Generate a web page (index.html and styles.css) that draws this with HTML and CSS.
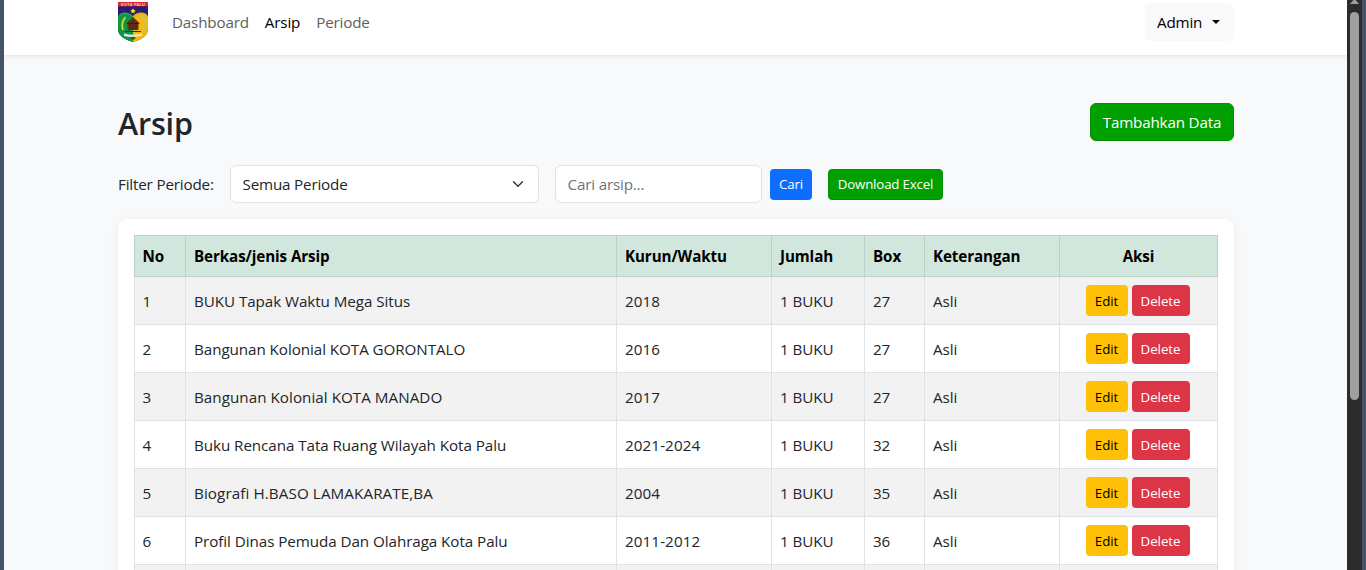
FILE: index.html
```html
<!DOCTYPE html>
<html lang="id">
<head>
<meta charset="utf-8">
<title>Arsip</title>
<link rel="stylesheet" href="styles.css">
</head>
<body>
<div class="window">
  <div class="page">
    <nav class="navbar">
      <svg class="logo" viewBox="0 0 30 40" width="30" height="40">
        <defs><clipPath id="shield"><path d="M0 4H30V27C30 34 23 37.500 15 40C7 37.500 0 34 0 27Z"/></clipPath></defs>
        <g clip-path="url(#shield)">
          <rect width="30" height="40" fill="#2b1b72"/>
          <path d="M0 15Q1 10.500 7 10.500Q12 10.500 15 14V40H0Z" fill="#149447"/>
          <path d="M30 15Q29 10.500 23 10.500Q18 10.500 15 14V40H30Z" fill="#f6b90e"/>
          <path d="M1.500 15Q2 11.500 7 11.300Q12 11.500 15 15Q18 11.500 23 11.300Q28 11.500 28.500 15" fill="none" stroke="#7fae8c" stroke-width=".5"/>
          <path d="M7.500 15Q2.500 21 5 28" fill="none" stroke="#c8dc28" stroke-width="1.800"/>
          <path d="M23.500 14Q29 21 25 29" fill="none" stroke="#a9cf86" stroke-width="1.800" stroke-dasharray="1.500 1"/>
          <path d="M15 15L22 21.500H20.500V28H9.500V21.500H8Z" fill="#6b3219"/>
          <path d="M9 21.500H21M12 20V28M15 18V28M18 20V28" stroke="#321a18" stroke-width=".8"/>
          <path d="M7 29.500H23" stroke="#393020" stroke-width="1.200"/>
          <path d="M6 31.500Q15 34 24 31.500V33.500Q15 36 6 34Z" fill="#e6ebdc"/>
          <path d="M12 36Q15 33.500 18 36L15 38Z" fill="#3c5323"/>
        </g>
        <path d="M15 6.200L15.900 7.900L17.700 8.200L16.400 9.500L16.700 11.300L15 10.500L13.300 11.300L13.600 9.500L12.300 8.200L14.100 7.900Z" fill="#f5e52c"/>
        <rect width="30" height="4.300" fill="#df2430"/>
        <text class="logo-text" x="15" y="3.600" text-anchor="middle" textLength="24">KOTA PALU</text>
      </svg>
      <a class="nav-link nav-dashboard">Dashboard</a>
      <a class="nav-link active">Arsip</a>
      <a class="nav-link">Periode</a>
      <button class="btn btn-light">Admin<span class="caret"></span></button>
    </nav>
    <main class="content">
      <header class="heading">
        <h2>Arsip</h2>
        <button class="btn btn-green">Tambahkan Data</button>
      </header>
      <div class="filters">
        <label>Filter Periode:</label>
        <div class="select">Semua Periode
          <svg width="12" height="12" viewBox="0 0 16 16"><path d="m2 5 6 6 6-6" fill="none" stroke="#343a40" stroke-width="2" stroke-linecap="round" stroke-linejoin="round"/></svg>
        </div>
        <input class="search" type="text" placeholder="Cari arsip...">
        <button class="btn btn-sm btn-blue">Cari</button>
        <button class="btn btn-sm btn-green download">Download Excel</button>
      </div>
      <section class="card">
        <table>
          <colgroup><col class="c-no"><col class="c-berkas"><col class="c-waktu"><col class="c-jumlah"><col class="c-box"><col class="c-ket"><col class="c-aksi"></colgroup>
          <thead><tr><th>No</th><th>Berkas/jenis Arsip</th><th>Kurun/Waktu</th><th>Jumlah</th><th>Box</th><th>Keterangan</th><th class="aksi">Aksi</th></tr></thead>
          <tbody>
            <tr><td>1</td><td>BUKU Tapak Waktu Mega Situs</td><td class="year">2018</td><td>1 BUKU</td><td>27</td><td>Asli</td><td><div class="actions"><button class="btn btn-sm btn-yellow">Edit</button><button class="btn btn-sm btn-red">Delete</button></div></td></tr>
            <tr><td>2</td><td>Bangunan Kolonial KOTA GORONTALO</td><td class="year">2016</td><td>1 BUKU</td><td>27</td><td>Asli</td><td><div class="actions"><button class="btn btn-sm btn-yellow">Edit</button><button class="btn btn-sm btn-red">Delete</button></div></td></tr>
            <tr><td>3</td><td class="caps">Bangunan Kolonial KOTA MANADO</td><td class="year">2017</td><td>1 BUKU</td><td>27</td><td>Asli</td><td><div class="actions"><button class="btn btn-sm btn-yellow">Edit</button><button class="btn btn-sm btn-red">Delete</button></div></td></tr>
            <tr><td>4</td><td>Buku Rencana Tata Ruang Wilayah Kota Palu</td><td class="year">2021-2024</td><td>1 BUKU</td><td>32</td><td>Asli</td><td><div class="actions"><button class="btn btn-sm btn-yellow">Edit</button><button class="btn btn-sm btn-red">Delete</button></div></td></tr>
            <tr><td>5</td><td class="caps-wide">Biografi H.BASO LAMAKARATE,BA</td><td class="year">2004</td><td>1 BUKU</td><td>35</td><td>Asli</td><td><div class="actions"><button class="btn btn-sm btn-yellow">Edit</button><button class="btn btn-sm btn-red">Delete</button></div></td></tr>
            <tr><td>6</td><td>Profil Dinas Pemuda Dan Olahraga Kota Palu</td><td class="year">2011-2012</td><td>1 BUKU</td><td>36</td><td>Asli</td><td><div class="actions"><button class="btn btn-sm btn-yellow">Edit</button><button class="btn btn-sm btn-red">Delete</button></div></td></tr>
            <tr><td></td><td></td><td></td><td></td><td></td><td></td><td></td></tr>
          </tbody>
        </table>
      </section>
    </main>
  </div>
  <div class="scrollbar">
    <svg width="9" height="4" viewBox="0 0 9 4"><path d="M3.500 0H5.500L9 4H0Z" fill="#a0a0a0"/></svg>
    <div class="thumb"></div>
  </div>
</div>
</body>
</html>
```
FILE: styles.css
```css
* { box-sizing: border-box; }
body {
  margin: 0;
  height: 570px;
  overflow: hidden;
  background: #43546a;
  color: #212529;
  font: 15.2px/24px "Open Sans", "Noto Sans", sans-serif;
  letter-spacing: -0.17px;
}
.window { display: flex; height: 570px; padding: 0 4px; }
.page { width: 1343px; height: 570px; overflow: hidden; background: #f8f9fa; }
.navbar {
  position: relative;
  display: flex;
  align-items: center;
  height: 55px;
  padding: 0 113px 11px 114px;
  background: #fff;
  box-shadow: 0 2px 4px rgba(0, 0, 0, .075);
}
.logo { display: block; flex: none; }
.logo-text { font: bold 4px "Liberation Sans", sans-serif; letter-spacing: 0; fill: #f3c5c3; }
.nav-link { margin-right: 16px; color: #5e5e5e; }
.nav-dashboard { margin-left: 24px; }
.nav-link.active { color: #000; }
.btn {
  height: 38px;
  padding: 0 12px;
  border: 1px solid transparent;
  border-radius: 6px;
  font: inherit;
  letter-spacing: inherit;
  white-space: nowrap;
}
.btn-light { display: flex; align-items: center; width: 89px; margin-left: auto; padding: 0 11px; background: #f8f9fa; color: #000; }
.caret {
  margin-left: 10px;
  border: 4.8px solid transparent;
  border-top-color: #000;
  border-bottom: 0;
}
.btn-green { background: #00a000; border-color: #009000; color: #fff; }
.content { width: 1116px; margin: 48px 0 0 114px; }
.heading { display: flex; justify-content: space-between; height: 38px; }
.heading .btn { width: 144px; padding: 0; }
h2 { margin: 1px 0 0; font-size: 30.5px; line-height: 38px; font-weight: 600; letter-spacing: -0.2px; }
.filters { display: flex; align-items: center; height: 38px; margin-top: 24px; }
label { width: 112px; white-space: nowrap; }
.select, .search {
  height: 38px;
  padding: 0 12px;
  border: 1px solid #dee2e6;
  border-radius: 6px;
  background: #fff;
  font: inherit;
  letter-spacing: inherit;
}
.select { display: flex; align-items: center; justify-content: space-between; width: 309px; padding: 0 14px 0 11.5px; }
.search { width: 207px; margin: 0 8px 0 16px; padding: 0 11.5px; }
.search::placeholder { color: #6c757d; opacity: 1; }
.btn-sm { height: 31px; padding: 1px 0 0; border-radius: 4px; font-size: 13.3px; line-height: 21px; }
.btn-blue { width: 42px; background: #0d6efd; color: #fff; }
.download { width: 115px; margin-left: 16px; }
.card {
  height: 500px;
  margin-top: 16px;
  padding: 16px;
  border-radius: 10px;
  background: #fff;
  box-shadow: 0 2px 10px rgba(0, 0, 0, .06);
}
table { width: 1084px; table-layout: fixed; border-collapse: collapse; }
.c-no { width: 51px; }
.c-berkas { width: 431px; }
.c-waktu { width: 155px; }
.c-jumlah { width: 93px; }
.c-box { width: 60px; }
.c-ket { width: 135px; }
.c-aksi { width: 158px; }
th, td { padding: 0 8px; border: 1px solid #dee2e6; text-align: left; white-space: nowrap; letter-spacing: -0.06px; }
th { height: 41px; border-color: #bcd0c7; background: #d1e7dd; color: #000; font-weight: 700; letter-spacing: -0.1px; }
th.aksi { text-align: center; }
th:first-child, td:first-child { padding-left: 7.5px; }
td { height: 48px; }
.year { letter-spacing: .1px; }
.caps { letter-spacing: .04px; }
.caps-wide { letter-spacing: .1px; }
tbody tr:nth-child(odd) { background: #f2f2f2; }
.actions { display: flex; justify-content: center; gap: 4px; margin-right: 2px; }
.btn-yellow { width: 42px; background: #ffc107; color: #000; }
.btn-red { width: 58px; background: #dc3545; color: #fff; }
.scrollbar { display: flex; flex-direction: column; align-items: center; width: 15px; height: 570px; background: #2c2c2c; }
.scrollbar svg { display: block; }
.thumb { width: 9px; height: 388px; margin-top: 8px; border-radius: 5px; background: #9f9f9f; }
```
